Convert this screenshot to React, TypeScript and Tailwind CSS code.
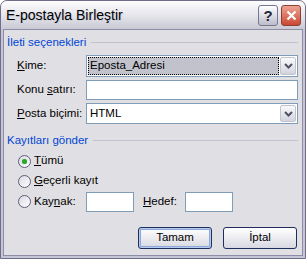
function Chevron() {
  return (
    <svg width="9" height="6" viewBox="0 0 9 6">
      <path d="M1 1 L4.5 4.5 L8 1" fill="none" stroke="#4d5266" strokeWidth="2" />
    </svg>
  )
}

function ArrowBtn() {
  return (
    <div className="w-[16px] h-full flex items-center justify-center rounded-[2px] border border-[#c3c3d0] bg-gradient-to-b from-[#fafafc] to-[#d3d3de]">
      <Chevron />
    </div>
  )
}

function Radio({ checked }: { checked?: boolean }) {
  return (
    <span className="w-[13px] h-[13px] shrink-0 rounded-full border border-[#5e5e7a] bg-gradient-to-br from-[#d9d9e2] to-white flex items-center justify-center">
      {checked && <span className="w-[5px] h-[5px] rounded-full bg-[#2ea42e] shadow-[0_0_1px_#6ed06e]" />}
    </span>
  )
}

function GroupTitle({ text }: { text: string }) {
  return (
    <div className="flex items-center h-[13px] pl-[3px] pr-[4px]">
      <span className="text-[#0046d5] leading-none">{text}</span>
      <div className="flex-1 ml-[5px] h-px bg-[#c2c1cf]" />
    </div>
  )
}

export default function App() {
  return (
    <div className="w-[307px] h-[260px] bg-white font-['Liberation_Sans',Arial,sans-serif] text-[11.5px] text-black">
      <div className="w-[306px] h-[259px] flex flex-col rounded-t-[7px] overflow-hidden border border-[#6e6d8c] bg-[#c6c5d6]">
        {/* title bar */}
        <div className="h-[28px] shrink-0 flex items-center pl-[5px] pr-[4px] bg-gradient-to-b from-[#fdfdfe] via-[#e6e6ec] to-[#c9c9d5]">
          <span className="flex-1 text-[14px] leading-none [text-shadow:1px_1px_0_#d0d0dc]">E-postayla Birleştir</span>
          <div className="w-[20px] h-[21px] rounded-[3px] border border-[#77778f] bg-gradient-to-b from-white to-[#bdbdcc] flex items-center justify-center text-[15px] font-bold text-[#25253a] leading-none">?</div>
          <div className="w-[20px] h-[21px] ml-[3px] rounded-[3px] border border-[#8f3f33] bg-gradient-to-b from-[#eca493] to-[#c94631] flex items-center justify-center">
            <svg width="11" height="11" viewBox="0 0 11 11">
              <path d="M1.5 1.5 L9.5 9.5 M9.5 1.5 L1.5 9.5" stroke="white" strokeWidth="2.2" />
            </svg>
          </div>
        </div>

        {/* body */}
        <div className="flex-1 mx-[2px] mb-[2px] border border-[#8e8da8] bg-[#e0dfe3] pt-[6px] flex flex-col">
          <GroupTitle text="İleti seçenekleri" />

          <div className="flex items-center pl-[13px] pr-[4px] mt-[6px] h-[22px]">
            <span className="w-[69px]"><u>K</u>ime:</span>
            <div className="flex-1 h-full flex border border-[#7f9db9] bg-white p-[1px]">
              <div className="flex-1 mr-[1px] flex items-center border border-dotted border-black bg-[#c2c2cc] pl-[1px]">Eposta_Adresi</div>
              <ArrowBtn />
            </div>
          </div>

          <div className="flex items-center pl-[13px] pr-[4px] mt-[3px] h-[20px]">
            <span className="w-[69px]">Konu <u>s</u>atırı:</span>
            <div className="flex-1 h-full border border-[#7f9db9] bg-white" />
          </div>

          <div className="flex items-center pl-[13px] pr-[4px] mt-[3px] h-[21px]">
            <span className="w-[69px]"><u>P</u>osta biçimi:</span>
            <div className="flex-1 h-full flex border border-[#7f9db9] bg-white p-[1px]">
              <div className="flex-1 flex items-center pl-[2px]">HTML</div>
              <ArrowBtn />
            </div>
          </div>

          <div className="mt-[10px]">
            <GroupTitle text="Kayıtları gönder" />
          </div>

          <div className="flex flex-col pl-[14px] mt-[4px]">
            <div className="flex items-center h-[20px] gap-[3px]">
              <Radio checked />
              <span><u>T</u>ümü</span>
            </div>
            <div className="flex items-center h-[20px] gap-[3px]">
              <Radio />
              <span><u>G</u>eçerli kayıt</span>
            </div>
            <div className="flex items-center h-[21px]">
              <Radio />
              <span className="ml-[3px] w-[52px]">Kay<u>n</u>ak:</span>
              <div className="w-[48px] h-[20px] border border-[#7f9db9] bg-white" />
              <span className="ml-[9px] w-[42px]"><u>H</u>edef:</span>
              <div className="w-[48px] h-[20px] border border-[#7f9db9] bg-white" />
            </div>
          </div>

          <div className="flex justify-end gap-[11px] pr-[5px] mt-[15px]">
            <button className="w-[74px] h-[22px] rounded-[3px] border border-[#1f2d5e] bg-gradient-to-b from-white to-[#d8d8e2] shadow-[inset_0_0_0_1px_#b6cbed,inset_0_0_0_2px_#8fa8dc]">
              Tamam
            </button>
            <button className="w-[74px] h-[22px] rounded-[3px] border border-[#1f2d5e] bg-gradient-to-b from-white to-[#d8d8e2]">
              İptal
            </button>
          </div>
        </div>
      </div>
    </div>
  )
}
